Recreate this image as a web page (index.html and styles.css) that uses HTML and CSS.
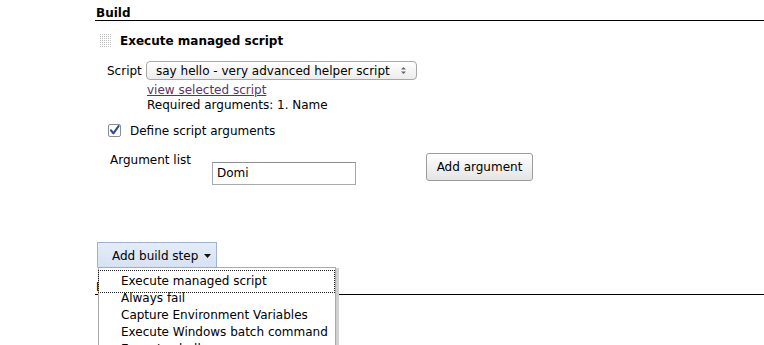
FILE: index.html
```html
<!DOCTYPE html>
<html>
<head>
<meta charset="utf-8">
<link rel="stylesheet" href="styles.css">
</head>
<body>
<div class="page">
  <div class="section-title first">Build</div>

  <div class="step-head">
    <span class="handle"></span>
    <span class="step-title">Execute managed script</span>
  </div>

  <div class="script-row">
    <span class="script-label">Script</span>
    <div class="select">
      <span class="select-text">say hello - very advanced helper script</span>
      <svg class="select-arrows" width="7" height="9" viewBox="0 0 7 9"><path d="M1 3.5 L3.5 1 L6 3.5 Z M1 5.5 L3.5 8 L6 5.5 Z" fill="#666"/></svg>
    </div>
  </div>

  <div class="script-info">
    <a class="view-link" href="#">view selected script</a>
    <div class="required">Required arguments: 1. Name</div>
  </div>

  <div class="check-row">
    <svg class="checkbox" width="13" height="13" viewBox="0 0 13 13">
      <rect x="0.5" y="0.5" width="12" height="12" rx="1.5" fill="#fdfdfd" stroke="#8c8c8c"/>
      <path d="M3 6.3 L5.4 9.3 L10.6 2.2" fill="none" stroke="#2a4f8c" stroke-width="2.1" stroke-linecap="round" stroke-linejoin="round"/>
    </svg>
    <span class="check-label">Define script arguments</span>
  </div>

  <div class="arg-row">
    <span class="arg-label">Argument list</span>
    <div class="arg-input">Domi</div>
    <button class="btn">Add argument</button>
  </div>

  <div class="add-step-wrap">
    <button class="add-step">Add build step <svg class="caret" width="7" height="4" viewBox="0 0 7 4"><path d="M0 0 H7 L3.5 4 Z" fill="#111"/></svg></button>
    <ul class="menu">
      <li class="focused">Execute managed script</li>
      <li>Always fail</li>
      <li>Capture Environment Variables</li>
      <li>Execute Windows batch command</li>
      <li>Execute shell</li>
    </ul>
  </div>

  <div class="section-title second">Post-build Actions</div>
</div>
</body>
</html>
```

FILE: styles.css
```css
html {
  overflow: hidden;
  height: 345px;
}
body {
  margin: 0;
  padding: 0;
  height: 345px;
  overflow: hidden;
  background: #fff;
  font-family: "DejaVu Sans", Verdana, sans-serif;
  font-size: 12px;
  color: #000;
}
.page {
  padding-left: 95px;
}
.section-title {
  font-weight: bold;
  line-height: 14px;
  padding-left: 1px;
  border-bottom: 1px solid #000;
}
.section-title.first {
  padding-top: 6px;
}
.section-title.second {
  margin-top: 12px;
}
.step-head {
  display: flex;
  align-items: center;
  height: 15px;
  margin-top: 12px;
}
.handle {
  width: 12px;
  height: 15px;
  margin-left: 4px;
  background-color: #fff;
  background-image:
    linear-gradient(90deg, #fff 1px, transparent 1px),
    linear-gradient(#fff 1px, #bdbdbd 1px);
  background-size: 2px 2px;
}
.step-title {
  margin-left: 9px;
  font-weight: bold;
}
.script-row {
  display: flex;
  align-items: center;
  margin-top: 13px;
  padding-left: 12px;
}
.script-label {
  width: 39px;
}
.select {
  height: 17px;
  border: 1px solid #a8a8a8;
  border-radius: 4px;
  background: linear-gradient(#ffffff, #ececec);
  display: flex;
  align-items: center;
  justify-content: space-between;
  padding: 0 9px 0 9px;
  box-sizing: content-box;
  width: 251px;
}
.select-text {
  white-space: nowrap;
}
.script-info {
  margin-top: 3px;
  padding-left: 52px;
  line-height: 15px;
}
.view-link {
  color: #5c3566;
  text-decoration: underline;
}
.check-row {
  display: flex;
  align-items: center;
  height: 17px;
  margin-top: 9px;
  padding-left: 13px;
}
.checkbox {
  display: block;
}
.check-label {
  margin-left: 9px;
}
.arg-row {
  display: flex;
  align-items: flex-start;
  margin-top: 13px;
}
.arg-label {
  width: 102px;
  padding-left: 15px;
  padding-top: 1px;
  line-height: 14px;
}
.arg-input {
  margin-top: 10px;
  width: 138px;
  height: 21px;
  line-height: 21px;
  padding-left: 4px;
  border: 1px solid #a9a9a9;
  border-top-color: #8f8f8f;
  background: #fff;
}
.btn {
  margin-left: 70px;
  margin-top: 1px;
  width: 107px;
  height: 28px;
  font-family: inherit;
  font-size: 12px;
  color: #000;
  border: 1px solid #9c9c9c;
  border-radius: 3px;
  background: linear-gradient(#ffffff, #e4e4e4);
  padding: 0;
}
.add-step-wrap {
  position: relative;
  margin-top: 57px;
  margin-left: 2px;
  height: 26px;
}
.add-step {
  display: flex;
  align-items: center;
  width: 120px;
  height: 26px;
  padding: 1px 0 0 14px;
  font-family: inherit;
  font-size: 12px;
  color: #000;
  border: 1px solid #9fb3d1;
  border-bottom-color: #dce6f4;
  background: linear-gradient(#e4ecf8, #d6e2f3);
}
.caret {
  margin-left: 6px;
}
.menu {
  position: absolute;
  left: 1px;
  top: 25px;
  width: 236px;
  margin: 0;
  padding: 5px 0 0 0;
  list-style: none;
  border: 1px solid #aaaaaa;
  background: #fff;
  box-shadow: 3px 1px 0 #d0d0d0;
  z-index: 2;
}
.menu li {
  line-height: 17px;
  padding-left: 20px;
  margin: 0 3px 0 2px;
  white-space: nowrap;
}
.menu li.focused {
  outline: 1px dotted #222;
  outline-offset: 2px;
}
```
